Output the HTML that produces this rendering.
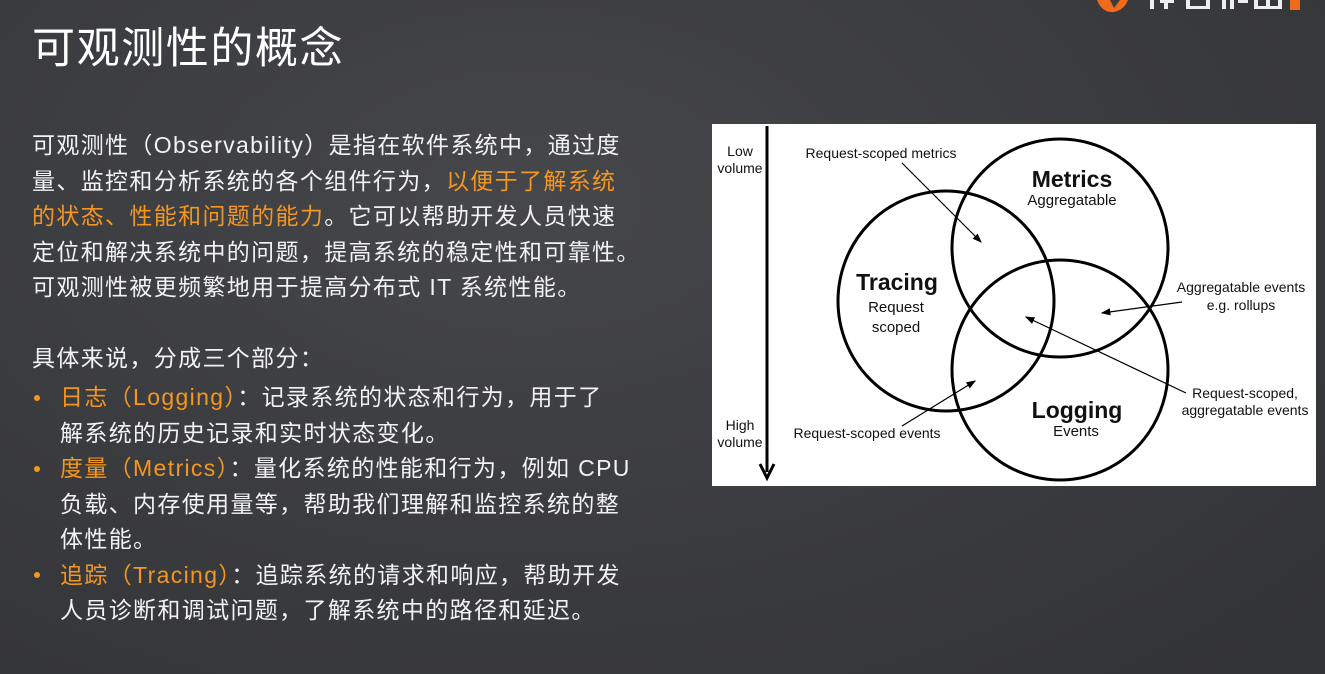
<!DOCTYPE html>
<html><head><meta charset="utf-8"><style>
html,body{margin:0;padding:0}
body{width:1325px;height:674px;overflow:hidden;position:relative;
background:radial-gradient(ellipse at 40% 30%,#46474a 0%,#3b3c3f 50%,#323336 100%);
font-family:"Liberation Sans","Noto Sans CJK SC",sans-serif;color:#f2f2f2}
.t{position:absolute;white-space:nowrap}
.title{left:32px;top:14px;font-size:43px;letter-spacing:1.6px;color:#fff}
.p{font-size:23px;letter-spacing:1.35px;line-height:35.5px}
.o{color:#f5961e}
.dot{position:absolute;left:34px;width:6px;height:6px;border-radius:50%;background:#f5961e}
</style></head><body>
<div class="t title">可观测性的概念</div>
<div class="t p" style="left:32px;top:128px">
可观测性（Observability）是指在软件系统中，通过度<br>
量、监控和分析系统的各个组件行为，<span class="o">以便于了解系统</span><br>
<span class="o">的状态、性能和问题的能力</span>。它可以帮助开发人员快速<br>
定位和解决系统中的问题，提高系统的稳定性和可靠性。<br>
可观测性被更频繁地用于提高分布式 IT 系统性能。</div>
<div class="t p" style="left:32px;top:341px">具体来说，分成三个部分：</div>
<div class="t p" style="left:60px;top:380px">
<span class="o">日志（Logging）</span>：记录系统的状态和行为，用于了<br>
解系统的历史记录和实时状态变化。<br>
<span class="o">度量（Metrics）</span>：量化系统的性能和行为，例如 CPU<br>
负载、内存使用量等，帮助我们理解和监控系统的整<br>
体性能。<br>
<span class="o">追踪（Tracing）</span>：追踪系统的请求和响应，帮助开发<br>
人员诊断和调试问题，了解系统中的路径和延迟。</div>
<div class="dot" style="top:395px"></div>
<div class="dot" style="top:466px"></div>
<div class="dot" style="top:572px"></div>

<svg style="position:absolute;left:1090px;top:0" width="235" height="14">
<path d="M7 0 Q12 13 24 12 Q34 10 38 0 Z" fill="#f06a1c"/>
<path d="M20 0 L24 8 L30 0Z" fill="#3a3b3e"/>
<g fill="#eee">
<rect x="60" y="0" width="4" height="9"/><rect x="70" y="0" width="14" height="3"/><rect x="74" y="3" width="4" height="6"/>
<rect x="96" y="0" width="4" height="9"/><rect x="96" y="6" width="24" height="3"/><rect x="116" y="0" width="4" height="9"/>
<rect x="132" y="0" width="4" height="9"/><rect x="140" y="0" width="4" height="9"/><rect x="148" y="0" width="10" height="3"/>
<rect x="164" y="0" width="4" height="9"/><rect x="164" y="6" width="28" height="3"/><rect x="176" y="0" width="4" height="9"/><rect x="188" y="0" width="4" height="9"/>
</g>
<rect x="200" y="0" width="10" height="10" fill="#f06a1c"/>
</svg>

<svg style="position:absolute;left:712px;top:124px" width="604" height="362" viewBox="712 124 604 362">
<rect x="712" y="124" width="604" height="362" fill="#fff"/>
<defs><marker id="a" markerWidth="8" markerHeight="8" refX="7" refY="4" orient="auto"><path d="M0 1 L8 4 L0 7Z" fill="#000"/></marker></defs>
<line x1="767" y1="126" x2="767" y2="472" stroke="#000" stroke-width="3"/>
<path d="M760 464 L767 478 L774 464" fill="none" stroke="#000" stroke-width="3"/>
<g fill="none" stroke="#000" stroke-width="3">
<ellipse cx="946" cy="301" rx="108" ry="110"/>
<ellipse cx="1060" cy="248" rx="108" ry="109"/>
<ellipse cx="1060" cy="370" rx="108" ry="110"/>
</g>
<g stroke="#000" stroke-width="1.2" marker-end="url(#a)">
<line x1="902" y1="163" x2="981" y2="242"/>
<line x1="1182" y1="302" x2="1102" y2="313"/>
<line x1="1186" y1="393" x2="1026" y2="317"/>
<line x1="902" y1="426" x2="975" y2="381"/>
</g>
<g font-family="Liberation Sans,sans-serif" fill="#111" font-size="14">
<text x="740" y="156" text-anchor="middle">Low</text>
<text x="740" y="173" text-anchor="middle">volume</text>
<text x="740" y="430" text-anchor="middle">High</text>
<text x="740" y="447" text-anchor="middle">volume</text>
<text x="881" y="158" text-anchor="middle">Request-scoped metrics</text>
<text x="1072" y="205" text-anchor="middle" font-size="15">Aggregatable</text>
<text x="896" y="312" text-anchor="middle" font-size="15">Request</text>
<text x="896" y="332" text-anchor="middle" font-size="15">scoped</text>
<text x="1241" y="292" text-anchor="middle">Aggregatable events</text>
<text x="1241" y="310" text-anchor="middle">e.g. rollups</text>
<text x="1245" y="398" text-anchor="middle">Request-scoped,</text>
<text x="1245" y="415" text-anchor="middle">aggregatable events</text>
<text x="867" y="438" text-anchor="middle">Request-scoped events</text>
<text x="1076" y="436" text-anchor="middle" font-size="15">Events</text>
<g font-weight="bold" font-size="23">
<text x="1072" y="187" text-anchor="middle">Metrics</text>
<text x="897" y="290" text-anchor="middle">Tracing</text>
<text x="1077" y="418" text-anchor="middle">Logging</text>
</g></g>
</svg>
</body></html>
